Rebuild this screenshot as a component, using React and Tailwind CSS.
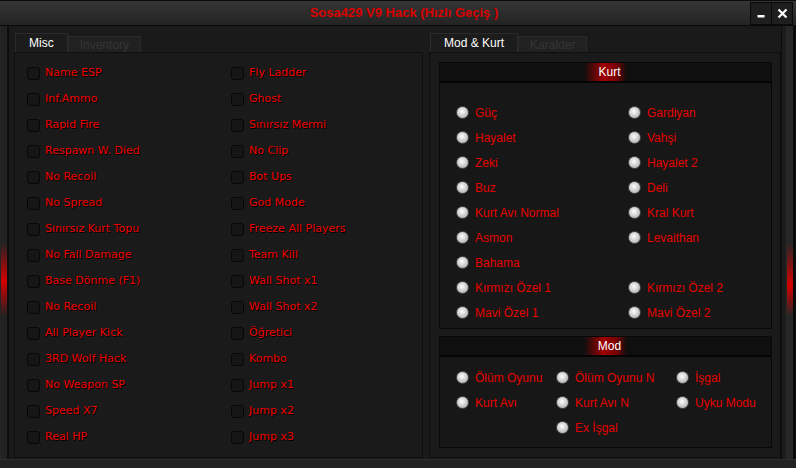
import React from "react";

const checksLeft = [
  "Name ESP",
  "Inf.Ammo",
  "Rapid Fire",
  "Respawn W. Died",
  "No Recoil",
  "No Spread",
  "Sınırsız Kurt Topu",
  "No Fall Damage",
  "Base Dönme (F1)",
  "No Recoil",
  "All Player Kick",
  "3RD Wolf Hack",
  "No Weapon SP",
  "Speed X7",
  "Real HP",
];

const checksRight = [
  "Fly Ladder",
  "Ghost",
  "Sınırsız Mermi",
  "No Clip",
  "Bot Ups",
  "God Mode",
  "Freeze All Players",
  "Team Kill",
  "Wall Shot x1",
  "Wall Shot x2",
  "Öğretici",
  "Kombo",
  "Jump x1",
  "Jump x2",
  "Jump x3",
];

const kurtRows = [
  ["Güç", "Gardiyan"],
  ["Hayalet", "Vahşi"],
  ["Zeki", "Hayalet 2"],
  ["Buz", "Deli"],
  ["Kurt Avı Normal", "Kral Kurt"],
  ["Asmon", "Levaithan"],
  ["Bahama", null],
  ["Kırmızı Özel 1", "Kırmızı Özel 2"],
  ["Mavi Özel 1", "Mavi Özel 2"],
];

const modRows = [
  ["Ölüm Oyunu", "Ölüm Oyunu N", "İşgal"],
  ["Kurt Avı", "Kurt Avı N", "Uyku Modu"],
  [null, "Ex İşgal", null],
];

function Check({ label }) {
  return (
    <div className="h-[26px] flex items-center">
      <span className="w-[13px] h-[13px] rounded-[3px] bg-[#161616] border border-[#070707] shrink-0" />
      <span className="ml-[5px] text-[11px] text-[#ee0000] [text-shadow:1px_1px_0_#000] font-['DejaVu_Sans',sans-serif] whitespace-nowrap">
        {label}
      </span>
    </div>
  );
}

function Radio({ label }) {
  return (
    <div className="h-[25px] flex items-center">
      <span className="w-[13px] h-[13px] rounded-full border border-[#4a4a4a] bg-[radial-gradient(circle_at_45%_40%,#ffffff_0%,#dcdcdc_35%,#9c9c9c_100%)] shrink-0" />
      <span className="ml-[6px] text-[12px] text-[#e60000] whitespace-nowrap">
        {label}
      </span>
    </div>
  );
}

function GroupHeader({ title }) {
  return (
    <div className="h-[20px] bg-[#0f0f0f] border-b-2 border-[#050505] flex items-center justify-center">
      <span className="pl-[14px] pr-[6px] h-full flex items-center text-[12px] text-white bg-[linear-gradient(to_right,transparent,#a00000_45%,#7a0000_75%,transparent)]">
        {title}
      </span>
    </div>
  );
}

function Tab({ label, active }) {
  return active ? (
    <div className="h-[19px] px-[13px] flex items-center bg-[#1c1c1c] border border-b-0 border-[#2a2a2a] text-[12px] text-white">
      {label}
    </div>
  ) : (
    <div className="h-[16px] px-[11px] flex items-center bg-[#212121] border border-b-0 border-[#2a2a2a] text-[12px] text-[#353535]">
      {label}
    </div>
  );
}

export default function App() {
  return (
    <div className="w-[796px] h-[468px] bg-[#1a1a1a] flex flex-col overflow-hidden font-['Liberation_Sans',Arial,sans-serif]">
      {/* title bar */}
      <div className="h-[26px] shrink-0 flex bg-[linear-gradient(to_bottom,#363636,#232323)] border-t border-b border-[#0a0a0a]">
        <div className="flex-1 flex items-center justify-center pl-[58px]">
          <span className="text-[13px] font-bold text-[#d80000]">Sosa429 V9 Hack (Hızlı Geçiş )</span>
        </div>
        <div className="flex pt-[1px] pr-[3px]">
          <button className="w-[22px] h-[23px] bg-[#1e1e1e] border border-[#0a0a0a] flex items-center justify-center">
            <svg width="10" height="10" viewBox="0 0 10 10">
              <rect x="1.5" y="6" width="7" height="2.5" fill="#fff" />
            </svg>
          </button>
          <button className="w-[21px] h-[23px] bg-[#1e1e1e] border border-l-0 border-[#0a0a0a] flex items-center justify-center">
            <svg width="11" height="11" viewBox="0 0 11 11">
              <path d="M1.5 1.5L9.5 9.5M9.5 1.5L1.5 9.5" stroke="#fff" strokeWidth="2.2" />
            </svg>
          </button>
        </div>
      </div>

      <div className="flex-1 flex min-h-0">
        {/* left edge */}
        <div className="w-[9px] shrink-0 border-l border-[#262626] border-r-2 border-r-[#0d0d0d] bg-[linear-gradient(to_bottom,#222_0%,#222_50%,#d40000_59%,#222_67%,#222_100%)]" />

        <div className="flex-1 flex pl-[5px] pt-[7px] pb-[1px]">
          {/* left panel */}
          <div className="w-[409px] flex flex-col">
            <div className="h-[19px] flex items-end pl-[1px]">
              <Tab label="Misc" active />
              <Tab label="Inventory" />
            </div>
            <div className="flex-1 border border-[#0f0f0f] bg-[#1a1a1a] flex pl-[12px] pt-[7px]">
              <div className="w-[204px]">
                {checksLeft.map((c, i) => (
                  <Check key={i} label={c} />
                ))}
              </div>
              <div>
                {checksRight.map((c, i) => (
                  <Check key={i} label={c} />
                ))}
              </div>
            </div>
          </div>

          {/* right panel */}
          <div className="ml-[6px] w-[352px] flex flex-col">
            <div className="h-[19px] flex items-end pl-[1px]">
              <Tab label="Mod & Kurt" active />
              <Tab label="Karakter" />
            </div>
            <div className="flex-1 border border-[#0f0f0f] flex flex-col pl-[9px] pr-[8px] pt-[9px] gap-[7px]">
              <div className="h-[267px] border border-[#080808] bg-[#171717] flex flex-col">
                <GroupHeader title="Kurt" />
                <div className="pl-[16px] pt-[17px]">
                  {kurtRows.map(([a, b], i) => (
                    <div key={i} className="flex">
                      <div className="w-[172px]">{a && <Radio label={a} />}</div>
                      <div>{b && <Radio label={b} />}</div>
                    </div>
                  ))}
                </div>
              </div>
              <div className="h-[112px] border border-[#080808] bg-[#171717] flex flex-col">
                <GroupHeader title="Mod" />
                <div className="pl-[16px] pt-[8px]">
                  {modRows.map(([a, b, c], i) => (
                    <div key={i} className="flex h-[25px]">
                      <div className="w-[100px]">{a && <Radio label={a} />}</div>
                      <div className="w-[120px]">{b && <Radio label={b} />}</div>
                      <div>{c && <Radio label={c} />}</div>
                    </div>
                  ))}
                </div>
              </div>
            </div>
          </div>
        </div>

        {/* right edge */}
        <div className="w-[15px] shrink-0 flex">
          <div className="w-[5px] border-l border-[#0d0d0d] bg-[#1c1c1c]" />
          <div className="w-[7px] border-l border-[#2a2a2a] bg-[linear-gradient(to_bottom,#262626_0%,#262626_50%,#d40000_60%,#262626_67%,#262626_100%)]" />
          <div className="w-[3px] bg-[#0a0a0a]" />
        </div>
      </div>

      {/* bottom */}
      <div className="h-[9px] shrink-0 bg-[#222] border-t border-[#2c2c2c]" />
    </div>
  );
}
